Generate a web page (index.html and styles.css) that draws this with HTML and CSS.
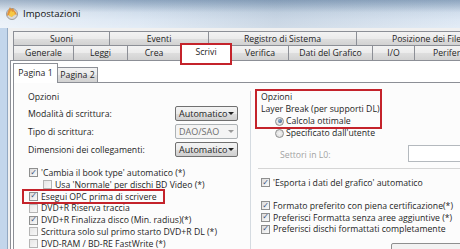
FILE: index.html
```html
<!DOCTYPE html>
<html lang="it">

<head>
    <meta charset="UTF-8">
    <title>Impostazioni</title>
    <link rel="stylesheet" href="styles.css">
</head>

<body>
    <div class="window">
        <div class="titlebar">
            <svg class="app-icon" width="14" height="14" viewBox="0 0 14 14">
                <circle cx="7" cy="8" r="5.5" fill="#d9d9d9" stroke="#8a8a8a" stroke-width="0.8"/>
                <circle cx="7" cy="8" r="1.5" fill="#ffffff" stroke="#9a9a9a" stroke-width="0.5"/>
                <path d="M2 10 C2 6 4 4 5 1 C6 4 7 3 8 2 C9 5 11 5 12 9 C10 8 8 9 7 11 C5 9 3 9 2 10 Z" fill="#e08a2a" opacity="0.9"/>
                <path d="M4 10 C4 7 5.5 6 6 4 C7 6 8 6 9 5.5 C9.5 7 10 8 10 9.5 C8.5 9 7.5 10 7 11 Z" fill="#f6c945"/>
            </svg>
            <span class="title">Impostazioni</span>
        </div>

        <div class="client">
            <div class="tabs">
                <div class="tabrow">
                    <div class="tab" style="width: 96px">Suoni</div>
                    <div class="tab" style="width: 99px">Eventi</div>
                    <div class="tab" style="width: 148px">Registro di Sistema</div>
                    <div class="tab" style="width: 140px">Posizione dei File</div>
                </div>
                <div class="tabrow">
                    <div class="tab" style="width: 60px">Generale</div>
                    <div class="tab" style="width: 54px">Leggi</div>
                    <div class="tab" style="width: 53px">Crea</div>
                    <div class="tab selected" style="width: 52px">Scrivi</div>
                    <div class="tab" style="width: 56px">Verifica</div>
                    <div class="tab" style="width: 84px">Dati del Grafico</div>
                    <div class="tab" style="width: 42px">I/O</div>
                    <div class="tab last" style="width: 70px">Periferica</div>
                </div>
            </div>

            <div class="tabpanel">
                <div class="subtabs">
                    <div class="subtab active">Pagina 1</div>
                    <div class="subtab">Pagina 2</div>
                </div>

                <div class="subpanel">
                    <div class="col-left">
                        <div class="group-title">Opzioni</div>
                        <div class="fields">
                            <span class="field-label">Modalità di scrittura:</span>
                            <div class="combo">Automatico</div>
                            <span class="field-label">Tipo di scrittura:</span>
                            <div class="combo disabled">DAO/SAO</div>
                            <span class="field-label">Dimensioni dei collegamenti:</span>
                            <div class="combo">Automatico</div>
                        </div>

                        <div class="checks">
                            <div class="check"><span class="box on"></span>'Cambia il book type' automatico (*)</div>
                            <div class="check indent"><span class="box off"></span>Usa 'Normale' per dischi BD Video (*)</div>
                            <div class="check marked"><span class="box on"></span>Esegui OPC prima di scrivere</div>
                            <div class="check"><span class="box off"></span>DVD+R Riserva traccia</div>
                            <div class="check"><span class="box on"></span>DVD+R Finalizza disco (Min. radius)(*)</div>
                            <div class="check"><span class="box off"></span>Scrittura solo sul primo starto DVD+R DL (*)</div>
                            <div class="check"><span class="box off"></span>DVD-RAM / BD-RE FastWrite (*)</div>
                        </div>
                    </div>

                    <div class="col-right">
                        <div class="layer-group">
                            <div class="line">Opzioni</div>
                            <div class="line">Layer Break (per supporti DL)</div>
                            <div class="line radio-row"><span class="radio on"></span>Calcola ottimale</div>
                        </div>
                        <div class="line radio-row user"><span class="radio"></span>Specificato dall'utente</div>

                        <div class="sectors">
                            <span class="sectors-label">Settori in L0:</span>
                            <div class="textbox"></div>
                        </div>

                        <div class="separator"></div>

                        <div class="check export"><span class="box on"></span>'Esporta i dati del grafico' automatico</div>

                        <div class="format-checks">
                            <div class="check"><span class="box on"></span>Formato preferito con piena certificazione(*)</div>
                            <div class="check"><span class="box on"></span>Preferisci Formatta senza aree aggiuntive (*)</div>
                            <div class="check"><span class="box on"></span>Preferisci dischi formattati completamente</div>
                        </div>

                        <div class="bottom-box"></div>
                    </div>
                </div>
            </div>
        </div>
    </div>
</body>

</html>
```

FILE: styles.css
```css
* {
    box-sizing: border-box;
}

body {
    margin: 0;
    width: 460px;
    height: 249px;
    overflow: hidden;
    font-family: "Open Sans", "Noto Sans", sans-serif;
    font-size: 8.7px;
    color: #1e1e1e;
    background-color: #c3d6eb;
}

.window {
    height: 249px;
    display: flex;
    flex-direction: column;
}

/* aero title bar */
.titlebar {
    height: 28px;
    flex-shrink: 0;
    display: flex;
    align-items: center;
    gap: 4px;
    padding-left: 5px;
    padding-bottom: 2px;
    background: linear-gradient(180deg, rgba(70, 100, 135, 0.35) 0%, rgba(70, 100, 135, 0) 45%),
        linear-gradient(90deg, rgba(255, 255, 255, 0.4) 0%, rgba(255, 255, 255, 0) 30%, rgba(60, 90, 120, 0.12) 60%, rgba(255, 255, 255, 0) 100%),
        linear-gradient(180deg, #b4c8dd 0%, #cddbea 35%, #dce7f3 70%, #e3ecf6 100%);
}

.title {
    font-size: 9.6px;
    color: #111;
}

.client {
    flex: 1;
    margin-left: 7px;
    border-left: 1px solid #93a9c2;
    background-color: #f0f0f0;
    padding-top: 3px;
    display: flex;
    flex-direction: column;
}

/* main tabs */
.tabs {
    margin-left: 5px;
}

.tabrow {
    display: flex;
    height: 14px;
    white-space: nowrap;
}

.tabrow + .tabrow {
    height: 15px;
}

.tab {
    flex-shrink: 0;
    display: flex;
    align-items: center;
    justify-content: center;
    border-top: 1px solid #8c8f96;
    border-left: 1px solid #8c8f96;
    background: linear-gradient(180deg, #f3f3f3 0%, #ebebeb 50%, #dedede 51%, #d2d2d2 100%);
    overflow: hidden;
}

.tab.last {
    justify-content: flex-start;
    padding-left: 18px;
}

.tab.selected {
    position: relative;
    z-index: 1;
    align-self: flex-start;
    height: 22px;
    margin-top: -2px;
    padding-bottom: 5px;
    border: 2px solid #c4232b;
    background: #fff;
}

.tab.selected + .tab {
    border-left: none;
}

.tabpanel {
    flex: 1;
    margin-left: 2px;
    border-top: 1px solid #8c8f96;
    border-left: 1px solid #8c8f96;
    background-color: #fff;
    padding: 2px 0 0 2px;
    display: flex;
    flex-direction: column;
}

/* Pagina 1 / Pagina 2 */
.subtabs {
    display: flex;
    align-items: flex-end;
    height: 19px;
}

.subtab {
    height: 15px;
    width: 40px;
    display: flex;
    align-items: center;
    justify-content: center;
    border-top: 1px solid #8c8f96;
    border-right: 1px solid #8c8f96;
    background: linear-gradient(180deg, #f3f3f3 0%, #ebebeb 50%, #dedede 51%, #d2d2d2 100%);
}

.subtab.active {
    position: relative;
    z-index: 1;
    width: 45px;
    height: 20px;
    margin-bottom: -1px;
    padding-bottom: 2px;
    border-left: 1px solid #8c8f96;
    border-right: 1px solid #8c8f96;
    background: #fff;
}

.subtab.active + .subtab {
    border-left: none;
}

.subpanel {
    flex: 1;
    border-top: 1px solid #8c8f96;
    border-left: 1px solid #8c8f96;
    background-color: #fcfcfc;
    display: flex;
}

/* left column */
.col-left {
    width: 237px;
    flex-shrink: 0;
    margin-top: 8px;
    padding-left: 14px;
    border-right: 1px solid #d5dbe1;
}

.group-title,
.line {
    height: 12px;
    line-height: 12px;
    white-space: nowrap;
}

.fields {
    display: grid;
    grid-template-columns: 147px 63px;
    grid-auto-rows: 17px;
    row-gap: 1px;
    margin-top: 2px;
    align-items: center;
}

.combo {
    position: relative;
    height: 15px;
    line-height: 13px;
    padding-left: 3px;
    border: 1px solid #707070;
    border-radius: 2px;
    background: linear-gradient(180deg, #f3f3f3 0%, #ebebeb 50%, #dddddd 51%, #cfcfcf 100%);
    font-size: 9px;
}

.combo::after {
    content: '';
    position: absolute;
    right: 3px;
    top: 5px;
    border-left: 3px solid transparent;
    border-right: 3px solid transparent;
    border-top: 3px solid #222;
}

.combo.disabled {
    color: #6d6d6d;
    border-color: #adb2b5;
    background: #f4f4f4;
}

.combo.disabled::after {
    border-top-color: #9a9a9a;
}

.checks {
    margin-top: 9px;
}

.check {
    height: 11.8px;
    display: flex;
    align-items: center;
    white-space: nowrap;
}

.check.indent {
    padding-left: 14px;
}

.check.marked {
    width: 139px;
    margin-left: -4px;
    padding-left: 4px;
    outline: 2px solid #c4232b;
}

.box {
    width: 9px;
    height: 9px;
    margin: 0 3px 0 1px;
    flex-shrink: 0;
    border: 1px solid #8e8f8f;
    background: linear-gradient(135deg, #dcdcdc 0%, #fafafa 100%);
    display: flex;
    align-items: center;
    justify-content: center;
    font-size: 8px;
    line-height: 1;
    color: #3c5281;
}

.box.on::before {
    content: '\2713';
    font-family: "DejaVu Sans", sans-serif;
    font-weight: bold;
}

.box.off {
    border-color: #b4b4b4;
    background: linear-gradient(135deg, #e6e6e6 0%, #f8f8f8 100%);
}

/* right column */
.col-right {
    flex: 1;
    padding: 8px 0 0 6px;
    white-space: nowrap;
}

.layer-group {
    width: 123px;
    padding-left: 4px;
    outline: 2px solid #c4232b;
}

.radio-row {
    display: flex;
    align-items: center;
    padding-left: 14px;
}

.radio-row.user {
    padding-left: 18px;
}

.radio {
    width: 9px;
    height: 9px;
    margin-right: 2px;
    border-radius: 50%;
    border: 1px solid #8e8f8f;
    background: radial-gradient(circle, #f4f4f4 0%, #d6d6d6 100%);
    display: flex;
    align-items: center;
    justify-content: center;
}

.radio.on::before {
    content: '';
    width: 4px;
    height: 4px;
    border-radius: 50%;
    background: radial-gradient(circle at 35% 35%, #8fb3d6 0%, #2a4d7a 100%);
}

.sectors {
    display: flex;
    align-items: center;
    height: 17px;
    margin-top: 6px;
    padding-left: 23px;
}

.sectors-label {
    width: 128px;
    color: #a3a3a3;
    padding-top: 3px;
}

.textbox {
    width: 80px;
    height: 17px;
    border: 1px solid #b4b9be;
    background: #fff;
}

.separator {
    margin: 6px 0 0 1px;
    border-top: 1px solid #d5d5d5;
}

.check.export {
    margin-top: 8px;
    padding-left: 3px;
}

.format-checks {
    margin-top: 11px;
    padding-left: 3px;
}

.bottom-box {
    width: 80px;
    height: 12px;
    margin: 8px 0 0 134px;
    border: 1px solid #8e8f8f;
    border-radius: 2px;
    background: #f2f2f2;
}
```
